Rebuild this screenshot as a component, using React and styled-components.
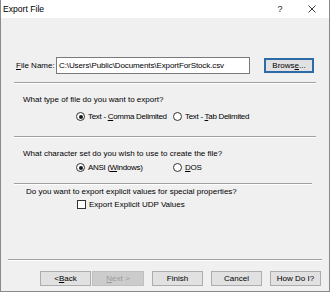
import React from 'react';
import styled, { createGlobalStyle } from 'styled-components';

const GlobalStyle = createGlobalStyle`
  html, body {
    margin: 0;
    padding: 0;
    background: #ffffff;
  }
  body {
    font-family: 'Liberation Sans', Arial, sans-serif;
    font-size: 8px;
    color: #000;
    white-space: nowrap;
  }
`;

const Window = styled.div`
  display: flex;
  flex-direction: column;
  box-sizing: border-box;
  width: 330px;
  height: 292px;
  border: 1px solid #8a8a8a;
  border-top: none;
`;

const TitleBar = styled.div`
  display: flex;
  align-items: center;
  height: 18px;
  padding-left: 2px;
  background: #ffffff;
  font-size: 8.6px;
`;

const Title = styled.span`
  flex: 1;
`;

const TitleButton = styled.span`
  display: flex;
  align-items: center;
  justify-content: center;
  width: ${({ $w }) => $w}px;
  height: 18px;
  font-size: 9px;
  color: #222;
`;

const Body = styled.div`
  flex: 1;
  display: flex;
  flex-direction: column;
  background: #f0f0f0;
`;

const FileRow = styled.div`
  display: flex;
  align-items: center;
  height: 17px;
  margin-top: 39px;
  padding-left: 15px;
`;

const Label = styled.span`
  width: 40px;
`;

const TextInput = styled.div`
  box-sizing: border-box;
  width: 194px;
  height: 17px;
  padding: 0 2px;
  display: flex;
  align-items: center;
  background: #ffffff;
  border: 1px solid #7a7a7a;
  overflow: hidden;
  letter-spacing: -0.1px;
`;

const Button = styled.div`
  box-sizing: border-box;
  display: flex;
  align-items: center;
  justify-content: center;
  width: ${({ $w }) => $w || 50}px;
  height: 15px;
  background: ${({ $disabled }) => ($disabled ? '#cccccc' : '#e1e1e1')};
  border: ${({ $default, $disabled }) =>
    $default ? '2px solid #2c6aa8' : `1px solid ${$disabled ? '#bfbfbf' : '#adadad'}`};
  color: ${({ $disabled }) => ($disabled ? '#9a9a9a' : '#000')};
`;

const BrowseButton = styled(Button)`
  margin-left: 14px;
`;

const Separator = styled.div`
  height: 0;
  margin: ${({ $top }) => $top}px ${({ $right }) => $right}px 0 ${({ $left }) => $left}px;
  border-top: 1px solid #a0a0a0;
  border-bottom: 1px solid #ffffff;
`;

const Question = styled.div`
  height: 11px;
  line-height: 11px;
  margin-top: ${({ $top }) => $top}px;
  padding-left: ${({ $left }) => $left}px;
`;

const OptionRow = styled.div`
  display: grid;
  grid-template-columns: 97px auto;
  height: 11px;
  margin-top: ${({ $top }) => $top}px;
  padding-left: 75px;
`;

const Option = styled.div`
  display: flex;
  align-items: center;
  gap: 3px;
  line-height: 11px;
  letter-spacing: -0.3px;
`;

const RadioCircle = styled.span`
  box-sizing: border-box;
  position: relative;
  flex: none;
  width: 9px;
  height: 9px;
  border: 1px solid #333333;
  border-radius: 50%;
  background: #ffffff;

  &::after {
    content: '';
    display: ${({ $checked }) => ($checked ? 'block' : 'none')};
    position: absolute;
    left: 1.5px;
    top: 1.5px;
    width: 4px;
    height: 4px;
    border-radius: 50%;
    background: #1a1a1a;
  }
`;

const CheckBox = styled.span`
  box-sizing: border-box;
  width: 9px;
  height: 9px;
  border: 1px solid #333333;
  background: #ffffff;
`;

const CheckRow = styled.div`
  display: flex;
  align-items: center;
  gap: 3px;
  height: 11px;
  margin-top: ${({ $top }) => $top}px;
  padding-left: 76px;
`;

const Spacer = styled.div`
  flex: 1;
`;

const ButtonBar = styled.div`
  display: flex;
  height: 15px;
  margin: 10px 0 5px 39px;
`;

const Group = styled.div`
  display: flex;
  gap: 1px;
  margin-right: 8px;
`;

const Key = styled.u`
  text-decoration: underline;
  text-underline-offset: 1px;
`;

const Radio = ({ checked, children }) => (
  <Option>
    <RadioCircle $checked={checked} />
    <span>{children}</span>
  </Option>
);

const CloseIcon = () => (
  <svg width="8" height="8" viewBox="0 0 8 8">
    <path d="M0.5 0.5 L7.5 7.5 M7.5 0.5 L0.5 7.5" stroke="#222" strokeWidth="0.9" />
  </svg>
);

export default function App() {
  return (
    <>
      <GlobalStyle />
      <Window>
        <TitleBar>
          <Title>Export File</Title>
          <TitleButton $w={30}>?</TitleButton>
          <TitleButton $w={34}>
            <CloseIcon />
          </TitleButton>
        </TitleBar>
        <Body>
          <FileRow>
            <Label>
              <Key>F</Key>ile Name:
            </Label>
            <TextInput>C:\Users\Public\Documents\ExportForStock.csv</TextInput>
            <BrowseButton $default>
              Brows<Key>e</Key>...
            </BrowseButton>
          </FileRow>
          <Separator $top={8} $left={13} $right={13} />

          <Question $top={10} $left={22}>What type of file do you want to export?</Question>
          <OptionRow $top={6}>
            <Radio checked>
              Text - <Key>C</Key>omma Delimited
            </Radio>
            <Radio>
              Text - <Key>T</Key>ab Delimited
            </Radio>
          </OptionRow>
          <Separator $top={14} $left={13} $right={13} />

          <Question $top={10} $left={22}>
            What character set do you wish to use to create the file?
          </Question>
          <OptionRow $top={3}>
            <Radio checked>
              ANSI (<Key>W</Key>indows)
            </Radio>
            <Radio>
              <Key>D</Key>OS
            </Radio>
          </OptionRow>
          <Separator $top={10} $left={13} $right={17} />

          <Question $top={1} $left={25}>
            Do you want to export explicit values for special properties?
          </Question>
          <CheckRow $top={2}>
            <CheckBox />
            <span>Export Explicit UDP Values</span>
          </CheckRow>

          <Spacer />
          <Separator $top={0} $left={7} $right={7} />
          <ButtonBar>
            <Group>
              <Button $w={51}>
                &lt; <Key>B</Key>ack
              </Button>
              <Button $w={52} $disabled>
                <Key>N</Key>ext &gt;
              </Button>
            </Group>
            <Group>
              <Button $w={51}>Finish</Button>
            </Group>
            <Group>
              <Button $w={51}>Cancel</Button>
            </Group>
            <Group>
              <Button $w={51}>How Do I?</Button>
            </Group>
          </ButtonBar>
        </Body>
      </Window>
    </>
  );
}
